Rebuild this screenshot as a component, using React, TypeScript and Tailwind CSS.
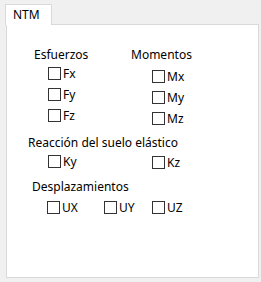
import React from "react";

const font = { fontFamily: '"Segoe UI", "Noto Sans", "DejaVu Sans", sans-serif' };

function Check({ label }: { label: string }) {
  return (
    <div className="flex items-center h-[13px]">
      <div className="w-[13px] h-[13px] border border-[#333333] bg-white shrink-0" />
      <span className="ml-[2px] leading-none">{label}</span>
    </div>
  );
}

export default function App() {
  return (
    <div
      className="w-[261px] h-[282px] bg-[#f0f0f0] text-[12px] text-black overflow-hidden"
      style={font}
    >
      <div className="pt-[4px] pl-[5px] relative z-10">
        <div className="w-[47px] h-[21px] bg-white border border-b-0 border-[#d9d9d9] pl-[7px] pt-[3px] leading-[14px]">
          NTM
        </div>
      </div>
      <div className="ml-[6px] -mt-px w-[253px] h-[254px] bg-white border border-[#d9d9d9] relative">
        <div className="flex pt-[23px]">
          <div className="ml-[27px] w-[97px] flex flex-col">
            <div className="h-[14px] leading-[14px]">Esfuerzos</div>
            <div className="ml-[14px] mt-[5px] flex flex-col gap-[8px]">
              <Check label="Fx" />
              <Check label="Fy" />
              <Check label="Fz" />
            </div>
          </div>
          <div className="flex flex-col">
            <div className="h-[14px] leading-[14px]">Momentos</div>
            <div className="ml-[21px] mt-[8px] flex flex-col gap-[8px]">
              <Check label="Mx" />
              <Check label="My" />
              <Check label="Mz" />
            </div>
          </div>
        </div>
        <div className="ml-[21px] mt-[11px] h-[14px] leading-[14px]">Reacción del suelo elástico</div>
        <div className="flex mt-[5px]">
          <div className="ml-[41px] w-[104px]">
            <Check label="Ky" />
          </div>
          <div className="mt-[1px]">
            <Check label="Kz" />
          </div>
        </div>
        <div className="ml-[25px] mt-[11px] h-[14px] leading-[14px]">Desplazamientos</div>
        <div className="flex mt-[7px]">
          <div className="ml-[40px] w-[57px]">
            <Check label="UX" />
          </div>
          <div className="w-[48px]">
            <Check label="UY" />
          </div>
          <div>
            <Check label="UZ" />
          </div>
        </div>
      </div>
    </div>
  );
}
